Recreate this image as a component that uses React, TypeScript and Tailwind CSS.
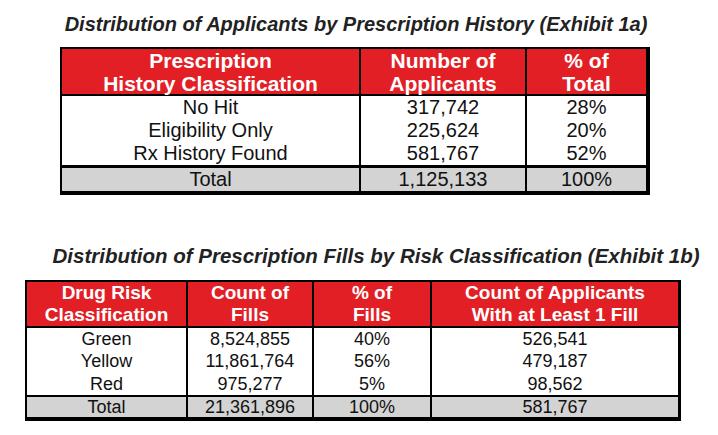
import React from 'react';

const font = { fontFamily: '"Liberation Sans", Arial, sans-serif' };

const exhibitA = {
  rows: [
    ['No Hit', '317,742', '28%'],
    ['Eligibility Only', '225,624', '20%'],
    ['Rx History Found', '581,767', '52%'],
  ],
  total: ['Total', '1,125,133', '100%'],
};

const exhibitB = {
  rows: [
    ['Green', '8,524,855', '40%', '526,541'],
    ['Yellow', '11,861,764', '56%', '479,187'],
    ['Red', '975,277', '5%', '98,562'],
  ],
  total: ['Total', '21,361,896', '100%', '581,767'],
};

export default function App() {
  return (
    <div className="w-[718px] h-[435px] bg-white pt-[13px] text-[#111]" style={font}>
      {/* Exhibit 1a */}
      <h2 className="ml-[55px] w-[602px] text-center text-[20px] leading-[22px] font-bold italic text-[#222] whitespace-nowrap">
        Distribution of Applicants by Prescription History (Exhibit 1a)
      </h2>
      <div className="ml-[60px] mt-[12px] w-[590px] border-l-2 border-t-2 border-r-4 border-b-4 border-black">
        <div className="grid grid-cols-[297px_166px_121px] bg-[#e31f26] text-white font-bold text-[21px] leading-[23px] h-[47px] border-b-2 border-black">
          <div className="flex flex-col items-center justify-center">
            <span>Prescription</span>
            <span>History Classification</span>
          </div>
          <div className="flex flex-col items-center justify-center border-l-2 border-black">
            <span>Number of</span>
            <span>Applicants</span>
          </div>
          <div className="flex flex-col items-center justify-center border-l-2 border-black">
            <span>% of</span>
            <span>Total</span>
          </div>
        </div>
        {exhibitA.rows.map((r) => (
          <div key={r[0]} className="grid grid-cols-[297px_166px_121px] h-[23px] text-[20px] leading-[23px] text-center">
            <div>{r[0]}</div>
            <div className="border-l-2 border-black">{r[1]}</div>
            <div className="border-l-2 border-black">{r[2]}</div>
          </div>
        ))}
        <div className="grid grid-cols-[297px_166px_121px] h-[26px] bg-[#d3d3d3] border-t-[3px] border-black text-[20px] leading-[23px] text-center">
          <div>{exhibitA.total[0]}</div>
          <div className="border-l-2 border-black">{exhibitA.total[1]}</div>
          <div className="border-l-2 border-black">{exhibitA.total[2]}</div>
        </div>
      </div>

      {/* Exhibit 1b */}
      <h2 className="ml-[50px] mt-[50px] w-[652px] text-center text-[20.5px] leading-[22px] font-bold italic text-[#222] whitespace-nowrap">
        Distribution of Prescription Fills by Risk Classification (Exhibit 1b)
      </h2>
      <div className="ml-[25px] mt-[13px] w-[656px] border-l-2 border-t-2 border-r-[3px] border-b-4 border-black">
        <div className="grid grid-cols-[159px_126px_118px_248px] bg-[#e31f26] text-white font-bold text-[19px] leading-[22px] h-[46px] border-b-2 border-black">
          <div className="flex flex-col items-center justify-center">
            <span>Drug Risk</span>
            <span>Classification</span>
          </div>
          <div className="flex flex-col items-center justify-center border-l-2 border-black">
            <span>Count of</span>
            <span>Fills</span>
          </div>
          <div className="flex flex-col items-center justify-center border-l-2 border-black">
            <span>% of</span>
            <span>Fills</span>
          </div>
          <div className="flex flex-col items-center justify-center border-l-2 border-black">
            <span>Count of Applicants</span>
            <span>With at Least 1 Fill</span>
          </div>
        </div>
        {exhibitB.rows.map((r, i) => (
          <div
            key={r[0]}
            className={`grid grid-cols-[159px_126px_118px_248px] text-[18px] text-center ${
              i === 1 ? 'h-[23px] leading-[23px]' : 'h-[22px] leading-[22px]'
            }`}
          >
            <div>{r[0]}</div>
            <div className="border-l-2 border-black">{r[1]}</div>
            <div className="border-l-2 border-black">{r[2]}</div>
            <div className="border-l-2 border-black">{r[3]}</div>
          </div>
        ))}
        <div className="grid grid-cols-[159px_126px_118px_248px] h-[22px] bg-[#d3d3d3] border-t-2 border-black text-[18px] leading-[20px] text-center">
          <div>{exhibitB.total[0]}</div>
          <div className="border-l-2 border-black">{exhibitB.total[1]}</div>
          <div className="border-l-2 border-black">{exhibitB.total[2]}</div>
          <div className="border-l-2 border-black">{exhibitB.total[3]}</div>
        </div>
      </div>
    </div>
  );
}
